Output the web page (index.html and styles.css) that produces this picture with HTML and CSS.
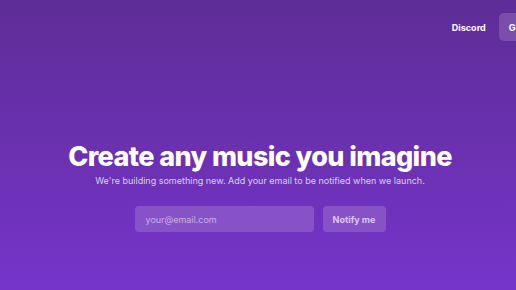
FILE: index.html
```html
<!DOCTYPE html>
<html lang="en">
  <head>
    <meta charset="UTF-8" />
    <meta name="viewport" content="width=device-width, initial-scale=1.0" />
    <title>Coming soon</title>
    <link rel="stylesheet" href="styles.css">
  </head>

  <body>
    <header class="top-nav">
      <a class="nav-link" href="#">Discord</a>
      <a class="nav-button" href="#">Get started</a>
    </header>

    <main class="hero">
      <h1 class="hero-title">Create any music you imagine</h1>
      <p class="hero-sub">We're building something new. Add your email to be notified when we launch.</p>

      <form class="notify-form" action="" method="GET">
        <input type="email" name="email" class="email-input" placeholder="your@email.com" />
        <button type="submit" class="notify-button">Notify me</button>
      </form>
    </main>
  </body>
</html>
```

FILE: styles.css
```css
:root {
  box-sizing: border-box;
  --text-soft: rgba(255, 255, 255, 0.78);
  --fill-soft: rgba(255, 255, 255, 0.16);
}
*,
*::before,
*::after {
  box-sizing: inherit;
}
html,
body {
  margin: 0;
  height: 100%;
}
body {
  background: linear-gradient(180deg, rgb(94, 45, 150) 0%, rgb(118, 52, 202) 100%);
  font-family: Inter, "Liberation Sans", sans-serif;
  color: white;
  overflow: hidden;
}

.top-nav {
  display: flex;
  justify-content: flex-end;
  align-items: center;
  gap: 13px;
  padding-top: 13px;
  margin-right: -52px;
}
.nav-link {
  color: white;
  text-decoration: none;
  font-size: 9px;
  font-weight: 700;
}
.nav-button {
  display: flex;
  align-items: center;
  height: 28px;
  padding: 0 10px;
  border-radius: 5px;
  background: var(--fill-soft);
  color: white;
  text-decoration: none;
  font-size: 9px;
  font-weight: 700;
}

.hero {
  display: flex;
  flex-direction: column;
  align-items: center;
  padding: 100px 0 0 4px;
}
.hero-title {
  margin: 0;
  font-size: 27px;
  font-weight: 800;
  letter-spacing: -0.6px;
  line-height: 32px;
}
.hero-sub {
  margin: 2px 0 0;
  font-size: 9px;
  color: var(--text-soft);
}

.notify-form {
  display: flex;
  gap: 9px;
  margin-top: 20px;
}
.email-input {
  width: 179px;
  height: 26px;
  padding: 0 11px;
  border: none;
  border-radius: 4px;
  background: var(--fill-soft);
  color: white;
  font-family: inherit;
  font-size: 9px;
}
.email-input::placeholder {
  color: rgba(255, 255, 255, 0.55);
}
.notify-button {
  width: 63px;
  height: 26px;
  padding: 0;
  border: none;
  border-radius: 4px;
  background: var(--fill-soft);
  color: rgba(255, 255, 255, 0.7);
  font-family: inherit;
  font-size: 9px;
  font-weight: 700;
}
```
